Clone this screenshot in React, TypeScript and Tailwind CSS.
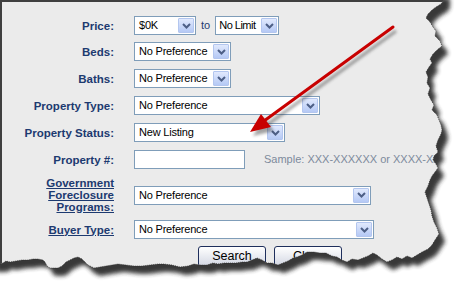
import React from "react";

const torn =
  "M-10 -10 L444 -10 L444 0 L441 4 L436 7 L432 10 L428 14 L426 18 L430 22 L433 27 L436 31 L435 36 L440 41 L442 46 L437 50 L433 54 L430 59 L432 63 L429 67 L426 72 L428 77 L427 83 L430 88 L428 94 L431 100 L434 105 L432 110 L437 115 L439 120 L441 125 L442 130 L441 134 L438 140 L436 146 L438 152 L434 156 L433 160 L436 164 L438 168 L435 172 L432 176 L430 180 L428 186 L425 192 L427 198 L429 204 L431 210 L432 216 L434 222 L437 228 L439 234 L435 240 L432 245 L428 249 L422 252 L417 255 L412 258 L407 256 L402 259 L397 257 L392 260 L387 262 L382 259 L377 255 L373 253 L368 256 L363 258 L358 260 L352 259 L347 262 L342 260 L337 257 L332 256 L326 253 L320 253 L314 252 L307 252 L302 255 L297 257 L293 258 L288 261 L283 263 L278 265 L272 263 L267 263 L262 260 L257 258 L252 260 L247 262 L242 262 L236 263 L230 263 L224 263 L218 264 L213 263 L207 265 L200 265 L194 264 L188 266 L180 267 L172 265 L164 264 L158 264 L150 265 L142 266 L134 266 L126 265 L118 264 L112 265 L106 266 L100 267 L94 268 L88 265 L85 262 L82 259 L78 257 L74 258 L70 260 L66 262 L62 266 L58 268 L54 268 L50 268 L47 266 L45 262 L43 260 L38 259 L33 259 L28 260 L22 260 L16 261 L10 262 L6 261 L3 263 L0 264 L-10 264 Z";

const outer = "M-20 -20 H480 V300 H-20 Z ";

function Chevron() {
  return (
    <svg width="9" height="6" viewBox="0 0 9 6">
      <path d="M1 1 L4.5 4.5 L8 1" fill="none" stroke="#4d5f86" strokeWidth="2" />
    </svg>
  );
}

function Select({
  value,
  className,
  tight,
}: {
  value: string;
  className: string;
  tight?: boolean;
}) {
  return (
    <div className={`flex h-[19px] shrink-0 items-center border border-[#7f9db9] bg-white ${className}`}>
      <span
        className={`flex-1 overflow-hidden whitespace-nowrap text-[11px] leading-none text-black ${
          tight ? "pl-[3px] tracking-[-0.5px]" : "pl-[4px] tracking-[-0.2px]"
        }`}
      >
        {value}
      </span>
      <span className="mr-px flex h-[15px] w-[16px] shrink-0 items-center justify-center rounded-[1px] border border-[#b3c6ef] bg-linear-to-b from-[#e1e9fd] to-[#b5c9f5]">
        <Chevron />
      </span>
    </div>
  );
}

function Row({
  label,
  link,
  className,
  children,
}: {
  label: React.ReactNode;
  link?: boolean;
  className: string;
  children: React.ReactNode;
}) {
  return (
    <div className={`flex items-center ${className}`}>
      <div
        className={`w-[112px] shrink-0 text-right text-[11.5px] font-bold leading-[12px] text-[#1d3a70] ${
          link ? "underline underline-offset-[1px]" : ""
        }`}
      >
        {label}
      </div>
      <div className="ml-[20px] flex shrink-0 items-center">{children}</div>
    </div>
  );
}

export default function App() {
  return (
    <div className="relative h-[282px] w-[457px] overflow-hidden bg-white font-['Liberation_Sans',Arial,sans-serif]">
      <div className="h-full border-l-2 border-t-2 border-[#3f3f3f] bg-[#ebebeb]">
        <div className="flex flex-col pt-[14px]">
          <Row label="Price:" className="">
            <Select value="$0K" className="w-[62px]" />
            <span className="mx-[5px] text-[11px] text-[#1d3a70]">to</span>
            <Select value="No Limit" className="w-[64px]" tight />
          </Row>
          <Row label="Beds:" className="mt-[7px]">
            <Select value="No Preference" className="w-[97px]" />
          </Row>
          <Row label="Baths:" className="mt-[8px]">
            <Select value="No Preference" className="w-[97px]" />
          </Row>
          <Row label="Property Type:" className="mt-[8px]">
            <Select value="No Preference" className="w-[186px]" />
          </Row>
          <Row label="Property Status:" className="mt-[8px]">
            <Select value="New Listing" className="w-[151px]" />
          </Row>
          <Row label="Property #:" className="mt-[8px]">
            <div className="h-[19px] w-[111px] shrink-0 border border-[#7f9db9] bg-white" />
            <span className="ml-[19px] whitespace-nowrap text-[11px] text-[#7d8a9c]">
              Sample: XXX-XXXXXX or XXXX-XXXXXX
            </span>
          </Row>
          <Row
            label={
              <>
                Government
                <br />
                Foreclosure
                <br />
                Programs:
              </>
            }
            link
            className="mt-[8px]"
          >
            <Select value="No Preference" className="w-[237px]" />
          </Row>
          <Row label="Buyer Type:" link className="mt-[7px]">
            <Select value="No Preference" className="w-[240px]" />
          </Row>
          <div className="ml-[196px] mt-[7px] flex gap-[8px]">
            <button className="h-[21px] w-[68px] rounded-[3px] border border-[#1f2f5c] bg-linear-to-b from-white to-[#d3d7e3] text-[12.5px] leading-none text-black">
              Search
            </button>
            <button className="h-[21px] w-[68px] rounded-[3px] border border-[#1f2f5c] bg-linear-to-b from-white to-[#d3d7e3] text-[12.5px] leading-none text-black">
              Clear
            </button>
          </div>
        </div>
      </div>

      <svg className="pointer-events-none absolute left-0 top-0" width="457" height="282" viewBox="0 0 457 282">
        <defs>
          <filter id="blur" x="-10%" y="-10%" width="120%" height="120%">
            <feGaussianBlur stdDeviation="2.2" />
          </filter>
          <filter id="ablur" x="-20%" y="-20%" width="140%" height="140%">
            <feGaussianBlur stdDeviation="1.6" />
          </filter>
          <clipPath id="outside">
            <path d={outer + torn} clipRule="evenodd" />
          </clipPath>
        </defs>

        {/* arrow */}
        <g transform="translate(3 4)" opacity="0.45" filter="url(#ablur)">
          <line x1="393" y1="27" x2="264" y2="121" stroke="#333" strokeWidth="3" />
          <polygon points="250,132 271,127 261,114" fill="#333" />
        </g>
        <line x1="393" y1="27" x2="264" y2="121" stroke="#c80000" strokeWidth="3" strokeLinecap="round" />
        <polygon points="250,132 271,127 261,114" fill="#c80000" />

        {/* torn paper edge */}
        <path d={outer + torn} fill="#ffffff" fillRule="evenodd" />
        <g clipPath="url(#outside)">
          <path d={torn} transform="translate(6 8)" fill="#2e2e2e" opacity="0.95" filter="url(#blur)" />
        </g>
        <path d={torn} fill="none" stroke="#2a2a2a" strokeWidth="0.7" strokeDasharray="1 1" />
      </svg>
    </div>
  );
}
